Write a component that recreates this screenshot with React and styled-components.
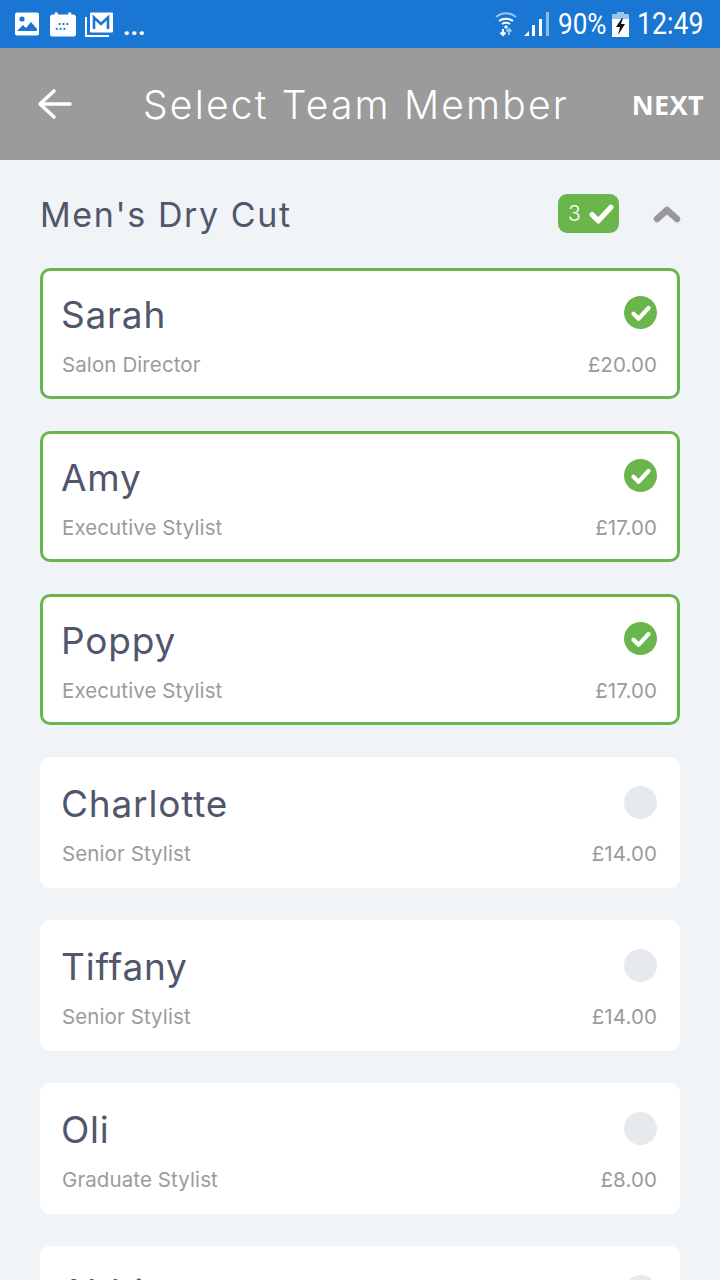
import React from 'react';
import styled, { createGlobalStyle } from 'styled-components';

const Global = createGlobalStyle`
  html, body { margin: 0; padding: 0; height: 1280px; overflow: hidden; background: #f1f4f7; }
  * { box-sizing: border-box; }
`;
const Page = styled.div`
  width: 720px; height: 1280px; overflow: hidden; background: #f1f4f7;
  font-family: Inter, "Open Sans", sans-serif; color: #50566b;
`;
const StatusBar = styled.div`
  height: 48px; background: #1976d2; color: #fff; display: flex; align-items: center;
  padding: 0 17px 0 15px; justify-content: space-between;
`;
const StatusGroup = styled.div`display: flex; align-items: center;`;
const StatusText = styled.span`
  display: inline-block; width: ${p => p.$w}px; font-family: Roboto, sans-serif; font-size: ${p => p.$size}px; line-height: 48px;
  white-space: nowrap; transform: scaleX(${p => p.$scale}); transform-origin: left center;
`;
const Dots = styled.span`
  font-family: Roboto, sans-serif; font-size: 26px; font-weight: 700; margin-left: 9px; line-height: 48px; position: relative; top: 2px;
`;
const Header = styled.header`
  height: 112px; background: #9b9b9b; color: #fff; display: flex; align-items: center; padding: 0 16px 0 37px;
`;
const Title = styled.h1`
  margin: 0 0 0 70px; font-weight: 300; font-size: 39px; letter-spacing: 2.2px; flex: 1; white-space: nowrap;
`;
const Next = styled.span`font-weight: 700; font-size: 27px; letter-spacing: 0.4px; font-family: "Open Sans", sans-serif;`;
const Content = styled.main`padding: 0 40px;`;
const Section = styled.div`height: 108px; display: flex; align-items: center; padding-top: 1px;`;
const SectionTitle = styled.h2`margin: 0; flex: 1; font-weight: 400; font-size: 34px; color: #50566b; letter-spacing: 1.6px; white-space: nowrap;`;
const Badge = styled.div`
  width: 61px; height: 39px; border-radius: 9px; background: #6ab64c; color: #fff; display: flex; align-items: center;
  padding-left: 10px; gap: 8px; font-size: 21px; font-weight: 300; margin-right: 34px; margin-top: -2px;
`;
const List = styled.div`display: flex; flex-direction: column; gap: 32px;`;
const Card = styled.div`
  height: 131px; border-radius: 10px; background: #fff; padding: 0 ${p => p.$on ? '20px 0 19px' : '23px 0 22px'};
  border: ${p => p.$on ? '3px solid #6ab64c' : 'none'};
  display: flex; flex-direction: column;
`;
const Row = styled.div`display: flex; justify-content: space-between; align-items: center;`;
const NameRow = styled(Row)`height: 61px; margin-top: ${p => p.$on ? 13 : 16}px;`;
const MetaRow = styled(Row)`margin-top: 6px; height: 26px;`;
const Name = styled.span`font-size: 37px; font-weight: 400; color: #50566b; letter-spacing: 0.8px; margin-left: -1px;`;
const Meta = styled.span`font-size: 20.5px; font-weight: 400; color: #9b9b9b; letter-spacing: 0.1px;`;
const Mark = styled.div`
  width: 33px; height: 33px; border-radius: 50%; background: ${p => p.$on ? '#6ab64c' : '#e6e9ed'};
  display: flex; align-items: center; justify-content: center; margin-top: ${p => p.$on ? -4 : -2}px; flex: none;
`;

const Check = ({ size = 18 }) => (
  <svg width={size} height={size} viewBox="0 0 24 24" fill="none" stroke="#fff" strokeWidth="5" strokeLinecap="round" strokeLinejoin="round">
    <path d="M3 13l6 6L21 6" />
  </svg>
);
const team = [
  ['Sarah', 'Salon Director', '£20.00', true],
  ['Amy', 'Executive Stylist', '£17.00', true],
  ['Poppy', 'Executive Stylist', '£17.00', true],
  ['Charlotte', 'Senior Stylist', '£14.00', false],
  ['Tiffany', 'Senior Stylist', '£14.00', false],
  ['Oli', 'Graduate Stylist', '£8.00', false],
  ['Abbie', 'Graduate Stylist', '£8.00', false],
];

export default function App() {
  return (
    <Page>
      <Global />
      <StatusBar>
        <StatusGroup>
          <svg width="24" height="24" viewBox="0 0 24 24" style={{marginRight: 11}}><rect width="24" height="23" y="0.5" rx="2" fill="#fff"/><circle cx="7" cy="7" r="2.6" fill="#1976d2"/><path d="M2 19l6-6 3 3 5-6 6 7v2H2z" fill="#1976d2"/></svg>
          <svg width="26" height="25" viewBox="0 0 27 25" style={{marginRight: 9}}><rect y="2" width="27" height="23" rx="3" fill="#fff"/><rect x="5" width="3" height="4" fill="#fff"/><rect x="19" width="3" height="4" fill="#fff"/><g fill="#1976d2"><rect x="9" y="11" width="2" height="2"/><rect x="13" y="11" width="2" height="2"/><rect x="17" y="11" width="2" height="2"/><rect x="6" y="16" width="2" height="2"/><rect x="10" y="16" width="2" height="2"/><rect x="14" y="16" width="2" height="2"/></g></svg>
          <svg width="29" height="25" viewBox="0 0 29 25" fill="none"><path d="M1 5v19h23" stroke="#fff" strokeWidth="2"/><rect x="5" y="0.5" width="23" height="20" rx="1" fill="#fff"/><path d="M9 17V5.5l7 6.5 7-6.5V17" stroke="#1976d2" strokeWidth="2.6"/></svg>
          <Dots>...</Dots>
        </StatusGroup>
        <StatusGroup>
          <svg width="24" height="26" viewBox="0 0 24 26" fill="none" style={{marginRight: 6}}><path d="M2 6c6-5 14-5 20 0" stroke="#9cc5ee" strokeWidth="2"/><path d="M5 10c4-3 10-3 14 0" stroke="#fff" strokeWidth="2"/><path d="M8 13c2.500-1.500 5.500-1.500 8 0" stroke="#fff" strokeWidth="2"/><circle cx="12" cy="16" r="1.700" fill="#fff"/><path d="M9 18v6m-2.500-2.500L9 24l2.500-2.500" stroke="#fff" strokeWidth="2"/><path d="M15 24v-6m-2.500 2.500L15 18l2.500 2.500" stroke="#9cc5ee" strokeWidth="2"/></svg>
          <svg width="25" height="25" viewBox="0 0 25 25" style={{marginRight: 9}}><path d="M0 24l5-5v5z" fill="#fff"/><rect x="8" y="13" width="3" height="11" fill="#fff"/><rect x="15" y="7" width="3" height="17" fill="#fff"/><rect x="22" y="0" width="3" height="24" fill="#8dbcec"/></svg>
          <StatusText $size={30} $w={48} $scale={0.87}>90%</StatusText>
          <svg width="17" height="25" viewBox="0 0 17 25" style={{margin: '0 8px 0 6px'}}><rect x="5" y="0" width="7" height="3" fill="#9cc5ee"/><rect y="2" width="17" height="5" fill="#9cc5ee"/><rect y="7" width="17" height="18" fill="#fff"/><path d="M10 6L4 15h4l-2 8 7-11H9l2-6z" fill="#111"/></svg>
          <StatusText $size={31} $w={66} $scale={0.86}>12:49</StatusText>
        </StatusGroup>
      </StatusBar>
      <Header>
        <svg width="36" height="32" viewBox="0 0 36 32" fill="none" stroke="#fff" strokeWidth="3.6" strokeLinecap="round" strokeLinejoin="round" style={{flex: 'none'}}><path d="M33 16H4M17 3L3 16l14 13"/></svg>
        <Title>Select Team Member</Title>
        <Next>NEXT</Next>
      </Header>
      <Content>
        <Section>
          <SectionTitle>Men's Dry Cut</SectionTitle>
          <Badge>3<Check size={25} /></Badge>
          <svg width="28" height="18" viewBox="0 0 28 18" fill="none" stroke="#97979c" strokeWidth="6.5" strokeLinecap="round" strokeLinejoin="round" style={{marginRight: -1, marginTop: -2}}><path d="M4 14l10-9 10 9"/></svg>
        </Section>
        <List>
          {team.map(([name, role, price, on]) => (
            <Card key={name} $on={on}>
              <NameRow $on={on}>
                <Name>{name}</Name>
                <Mark $on={on}>{on && <Check size={20} />}</Mark>
              </NameRow>
              <MetaRow>
                <Meta>{role}</Meta>
                <Meta>{price}</Meta>
              </MetaRow>
            </Card>
          ))}
        </List>
      </Content>
    </Page>
  );
}
